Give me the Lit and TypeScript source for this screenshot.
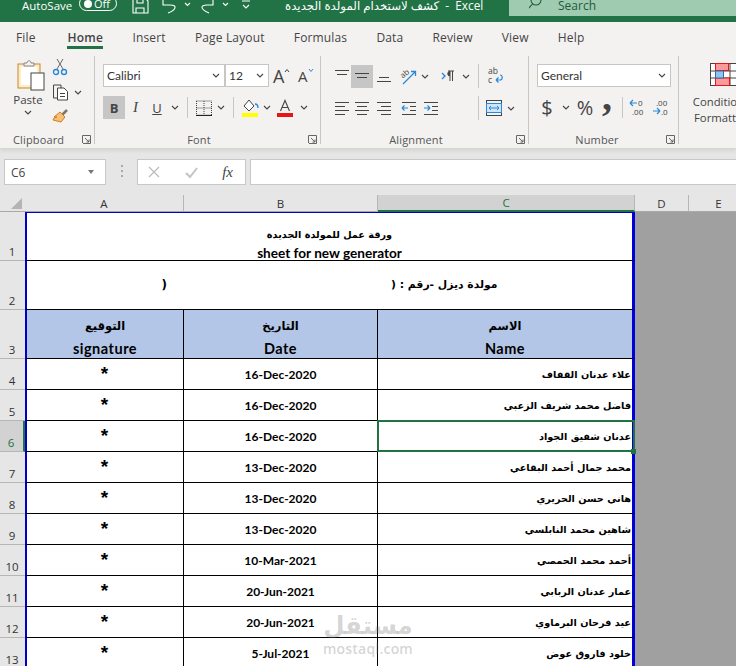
import { LitElement, html, css, svg } from "lit";
import { customElement } from "lit/decorators.js";

const chev = html`<svg class="chev" width="8" height="5" viewBox="0 0 8 5"><path d="M1 1l3 3 3-3" fill="none" stroke="#444" stroke-width="1.1"/></svg>`;

const launcher = html`<svg class="launcher" width="9" height="9" viewBox="0 0 9 9"><path d="M.5 8V.5H8.5V8.5H1M3 3l4 4M7 4.5V7H4.5" fill="none" stroke="#666"/></svg>`;

// horizontal text-alignment glyph: each entry is [x1, x2, y]
const lines = (rows: number[][], extra: unknown = "") => html`<svg width="17" height="16" viewBox="0 0 17 16">
  ${rows.map((r) => svg`<path d="M${r[0]} ${r[2]}.5H${r[1]}" stroke="#444"/>`)}${extra}
</svg>`;

const names = [
  "علاء عدنان القفاف",
  "فاضل محمد شريف الزعبي",
  "عدنان شفيق الجواد",
  "محمد جمال أحمد البقاعي",
  "هاني حسن الحريري",
  "شاهين محمد النابلسي",
  "أحمد محمد الحمصي",
  "عمار عدنان الربابي",
  "عيد فرحان البرماوي",
  "خلود فاروق عوض",
];
const dates = [
  "16-Dec-2020", "16-Dec-2020", "16-Dec-2020", "13-Dec-2020", "13-Dec-2020",
  "13-Dec-2020", "10-Mar-2021", "20-Jun-2021", "20-Jun-2021", "5-Jul-2021",
];
const tabs = ["File", "Home", "Insert", "Page Layout", "Formulas", "Data", "Review", "View", "Help"];

@customElement("app-root")
export class AppRoot extends LitElement {
  static styles = css`
    :host {
      display: block;
      position: relative;
      width: 736px;
      height: 666px;
      overflow: hidden;
      background: #e6e6e6;
      font-family: "Open Sans", "Noto Sans", sans-serif;
      font-size: 12px;
      color: #444;
    }
    svg { display: block; }

    .titlebar {
      display: flex;
      height: 22px;
      overflow: hidden;
      padding-left: 22px;
      background: #217346;
      color: #fff;
    }
    .bar-item { display: flex; align-items: center; height: 10px; white-space: pre; }
    .autosave { width: 52px; font-size: 11.5px; }
    .toggle {
      display: flex;
      align-items: center;
      box-sizing: border-box;
      width: 38px;
      height: 15px;
      margin: -3px 0 0 5px;
      padding: 0 6px 0 4px;
      justify-content: space-between;
      border: 1px solid #fff;
      border-radius: 8px;
      font-size: 11px;
    }
    .knob { width: 8px; height: 8px; border-radius: 50%; background: #fff; }
    .qat { margin-left: 15px; }
    .doc-title { margin-left: 33px; font-family: "Open Sans", "DejaVu Sans", sans-serif; font-size: 11.8px; }
    .search {
      display: flex;
      gap: 12px;
      box-sizing: border-box;
      width: 227px;
      height: 16px;
      margin-left: auto;
      padding-left: 20px;
      background: #9fcbb0;
      color: #1f5a3b;
    }

    .tabs {
      display: flex;
      gap: 29.2px;
      height: 28px;
      padding-left: 16px;
      background: #f3f2f1;
      line-height: 32px;
      font-size: 12px;
      letter-spacing: 0.15px;
    }
    .tab { position: relative; }
    .tab:first-child { margin-right: 2.6px; }
    .tab.on { font-weight: 600; color: #444; letter-spacing: 0.3px; }
    .tab.on::after {
      content: "";
      position: absolute;
      left: 0;
      right: 0;
      bottom: 1px;
      height: 3px;
      background: #217346;
    }

    .ribbon {
      display: flex;
      height: 92px;
      padding: 6px 0 0;
      background: #f3f2f1;
      box-shadow: 0 3px 3px #d6d5d4;
      position: relative;
    }
    .group {
      display: flex;
      flex-direction: column;
      box-sizing: border-box;
      height: 88px;
      padding-top: 8px;
      border-right: 1px solid #c8c6c4;
      flex: none;
    }
    .g-clip { width: 95px; }
    .g-font { width: 226px; padding-left: 8px; }
    .g-align { width: 208px; padding-left: 12px; }
    .g-num { width: 150px; padding-left: 8px; }
    .g-cond { width: 60px; border: 0; margin-left: 14px; align-items: center; padding-top: 7px; white-space: nowrap; line-height: 16px; font-size: 11.3px; }
    .g-cond svg { margin: 0 0 8px 0; }

    .rows { display: flex; flex-direction: column; gap: 9px; flex: 1; }
    .row { display: grid; height: 23px; align-items: center; justify-items: center; }
    .foot {
      display: grid;
      grid-template-columns: 1fr auto 1fr;
      align-items: center;
      height: 14px;
      margin: 0 3px -2px 0;
      font-size: 11px;
      letter-spacing: 0.15px;
      color: #555;
    }
    .g-font .foot, .g-num .foot { margin-left: -8px; }
    .g-align .foot { margin-left: -12px; }
    .foot .mid { margin-right: 14px; }
    .g-num .foot .mid { margin-right: 10px; }
    .launcher { justify-self: end; }
    .foot-l { justify-self: start; }
    .vsep { width: 1px; height: 21px; background: #c8c6c4; }
    .vsep.tall { height: 24px; }

    .clip-body { display: grid; grid-template-columns: 46px 1fr; flex: 1; }
    .paste { display: flex; flex-direction: column; align-items: center; }
    .paste svg:first-child { margin: -4px 0 1px 15px; }
    .paste span { margin: 0 0 3px 10px; font-size: 11.5px; line-height: 15px; }
    .paste .chev { margin-left: 10px; }
    .clip-tools { display: flex; flex-direction: column; gap: 7px; margin-top: -5px; padding-left: 6px; }
    .copy-line { display: flex; align-items: center; gap: 5px; }
    .g-clip .foot { margin-left: 13px; grid-template-columns: auto 1fr; }

    .box {
      display: flex;
      align-items: center;
      justify-content: space-between;
      box-sizing: border-box;
      height: 23px;
      padding: 0 4px 0 3px;
      background: #fff;
      border: 1px solid #c8c6c4;
      color: #333;
      font-family: "Lato", sans-serif;
      font-size: 12px;
      justify-self: stretch;
    }
    .r-font-1 { grid-template-columns: 122px 44px 4px 16px 9px 14px; }
    .r-font-2 { grid-template-columns: 22px 21px 22px 14px 11px 21px 14px 11px 22px 12px 24px 14px; }
    .r-al-1 { grid-template-columns: 18px 22px 22px 26px 8px 6px 26px 10px 14px 20px; }
    .r-al-2 { grid-template-columns: 18px 22px 22px 28px 16px 32px 14px 18px 16px; }
    .r-num-2 { grid-template-columns: 20px 17px 22px 22px 8px 23px 22px; }
    .r-num-1 { grid-template-columns: 134px; }
    .sel { background: #c6c6c6; width: 22px; height: 23px; display: flex; align-items: center; justify-content: center; }
    .fb { font-family: "Liberation Serif", serif; font-size: 15px; }
    .b { font-family: "Open Sans", sans-serif; font-weight: 700; font-size: 13px; }
    .i { font-family: "Liberation Serif", serif; font-style: italic; font-size: 15px; }
    .u { font-size: 13px; text-decoration: underline; }
    .big-a { font-size: 18px; line-height: 20px; display: flex; align-items: flex-start; justify-self: start; }
    .big-a.small { font-size: 15px; }
    .big-a svg { margin-top: 2px; }
    .num-sym { font-size: 20px; line-height: 20px; color: #444; }
    .num-sym.comma { font-family: "Liberation Serif", serif; font-weight: 700; font-size: 40px; line-height: 18px; margin-top: -22px; }

    .formula {
      display: flex;
      align-items: flex-start;
      height: 47px;
      box-sizing: border-box;
      padding: 11px 0 0 4px;
    }
    .fbox {
      box-sizing: border-box;
      height: 26px;
      background: #fff;
      border: 1px solid #c8c8c8;
      display: flex;
      align-items: center;
    }
    .namebox { width: 102px; justify-content: space-between; padding: 0 11px 0 6px; font-size: 12px; color: #444; }
    .arrow { width: 0; height: 0; border: 3.5px solid transparent; border-top: 4px solid #777; border-bottom: 0; }
    .dots { display: flex; flex-direction: column; gap: 3px; margin: 0 14px 0 15px; padding-top: 6px; }
    .dots i { width: 2px; height: 2px; background: #a8a8a8; }
    .fxbox { width: 109px; margin-right: 4px; padding: 0 12px 0 10px; justify-content: space-between; }
    .input { flex: 1; border-right: 0; }

    .sheet {
      display: grid;
      grid-template-columns: 25px 159px 194px 257px 54px 60px;
      grid-template-rows: 17px 49px 49px 49px repeat(10, 31px);
      background: #a0a0a0;
      font-family: "Lato", sans-serif;
      color: #000;
    }
    .corner { background: #e6e6e6; border-bottom: 1px solid #a9a9a9; display: flex; justify-content: flex-end; padding: 3px 3px 0 0; grid-column: 1; }
    .col {
      display: flex;
      align-items: center;
      justify-content: center;
      box-sizing: border-box;
      background: #e6e6e6;
      border-bottom: 1px solid #a9a9a9;
      border-right: 1px solid #b6b6b6;
      font-family: "Open Sans", sans-serif;
      font-size: 11.5px;
      color: #333;
    }
    .col.cur { background: #d2d2d2; border-bottom: 2px solid #217346; color: #217346; }
    .rh {
      grid-column: 1;
      display: flex;
      align-items: flex-end;
      justify-content: center;
      box-sizing: border-box;
      background: #e6e6e6;
      border-bottom: 1px solid #b6b6b6;
      padding-right: 1px;
      font-family: "Open Sans", sans-serif;
      font-size: 11.5px;
      line-height: 17px;
      color: #333;
    }
    .rh.cur { background: #d2d2d2; color: #217346; border-right: 2px solid #217346; }

    .c {
      display: flex;
      align-items: center;
      justify-content: center;
      box-sizing: border-box;
      background: #fff;
      border-right: 1px solid #000;
      border-bottom: 1px solid #000;
      white-space: nowrap;
      position: relative;
    }
    .c.a { border-left: 2px solid #0000c8; }
    .c.z { border-right: 3px solid #0000d8; }
    .wide { grid-column: span 3; border-left: 2px solid #0000c8; border-right: 3px solid #0000d8; }
    .top { border-top: 1px solid #0000c8; flex-direction: column; justify-content: flex-end; }
    .ar { font-family: "DejaVu Sans", sans-serif; font-weight: 700; }
    .t1-ar { font-size: 9.7px; line-height: 19px; margin-bottom: 1px; }
    .t1-en { font-size: 13.6px; font-weight: 700; line-height: 16px; margin-bottom: -1px; }
    .t2 { gap: 224px; font-size: 10.8px; padding: 0 0 1px 0; }
    .t2 span:first-child { font-size: 12px; }
    .head { background: #b4c6e7; flex-direction: column; justify-content: flex-end; }
    .head .ar { font-size: 11.5px; line-height: 26px; }
    .head b { font-size: 14.5px; letter-spacing: 0.5px; line-height: 20px; margin-bottom: -1px; }
    .star { align-items: flex-start; padding: 3px 1px 0 0; font-size: 19px; font-weight: 900; line-height: 24px; font-family: "Liberation Sans", sans-serif; }
    .date { font-size: 12px; font-weight: 700; padding-top: 1px; }
    .name { justify-content: flex-end; font-size: 9.7px; }
    .name span { margin-right: 1px; }
    .active::after {
      content: "";
      position: absolute;
      left: -1px;
      right: -3px;
      top: -1px;
      bottom: -1px;
      border: 2px solid #217346;
    }
    .active::before {
      content: "";
      position: absolute;
      right: -4px;
      bottom: -3px;
      width: 5px;
      height: 5px;
      background: #217346;
      z-index: 1;
    }

    .mark {
      position: absolute;
      left: 323px;
      top: 608px;
      width: 90px;
      text-align: center;
      color: rgba(110, 110, 110, 0.3);
      font-weight: 700;
      pointer-events: none;
    }
    .mark .ar { display: block; font-size: 24.5px; line-height: 36px; }
    .mark .en { display: block; font-family: "Open Sans", sans-serif; font-size: 14px; font-weight: 600; line-height: 10px; letter-spacing: 0.2px; }
  `;

  private titleBar() {
    return html`<div class="titlebar">
      <div class="bar-item autosave">AutoSave</div>
      <div class="bar-item">
        <div class="toggle"><span class="knob"></span><span>Off</span></div>
      </div>
      <svg class="qat" width="120" height="22" viewBox="0 0 120 22" fill="none" stroke="#fff" stroke-width="1.1">
        <path d="M1 -2H13L16 1V13H1ZM4 13V8H12V13M5 -2V3H11V-2"/>
        <path d="M31 0V5H38C46 5 44 10 36 13"/>
        <path d="M53 3l2.500 2.500 2.500-2.500"/>
        <path d="M81 0V5H75C68 5 68 9 77 13"/>
        <path d="M91 3l2.500 2.500 2.500-2.500"/>
        <path d="M110 1H118M111 5l3 3 3-3"/>
      </svg>
      <div class="bar-item doc-title">كشف لاستخدام المولدة الجديدة  -  Excel</div>
      <div class="search">
        <div class="bar-item">
          <svg width="17" height="14" viewBox="0 0 17 14" fill="none" stroke="#1f5a3b" stroke-width="1.1"><circle cx="7" cy="2" r="5"/><path d="M3.500 6L-1 11"/></svg>
        </div>
        <div class="bar-item">Search</div>
      </div>
    </div>`;
  }

  private clipboard() {
    return html`<section class="group g-clip">
      <div class="clip-body">
        <div class="paste">
          <svg width="28" height="31" viewBox="0 0 28 31">
            <rect x="1" y="4" width="22" height="24" fill="#fdeec8" stroke="#c8862a"/>
            <rect x="4" y="7" width="16" height="18" fill="#fff" stroke="none"/>
            <path d="M7 6V3H10C10 0 14 0 14 3H17V6Z" fill="#f3f2f1" stroke="#888"/>
            <rect x="14" y="13" width="13" height="17" fill="#fff" stroke="#444"/>
          </svg>
          <span>Paste</span>
          ${chev}
        </div>
        <div class="clip-tools">
          <svg width="16" height="18" viewBox="0 0 16 18" fill="none">
            <path d="M5 0l6 10M11 0L5 10" stroke="#666"/>
            <circle cx="4" cy="13" r="2.500" stroke="#2b88d8" stroke-width="1.400"/>
            <circle cx="12" cy="13" r="2.500" stroke="#2b88d8" stroke-width="1.400"/>
          </svg>
          <div class="copy-line">
            <svg width="17" height="17" viewBox="0 0 17 17" fill="#f3f2f1" stroke="#444">
              <path d="M1.500 1H9V14H1.500Z"/><path d="M5.500 4H12L15.500 7.500V16H5.500Z" fill="#fff"/>
              <path d="M8 9.500H13M8 12.500H13"/>
            </svg>
            ${chev}
          </div>
          <svg width="18" height="16" viewBox="0 0 18 16">
            <path d="M10 7l5-5" stroke="#777" stroke-width="2.500"/>
            <path d="M8 4l5 5-4 5-8-2 1-2 3-1-3 0Z" fill="#f5c179" stroke="#d57e1c"/>
          </svg>
        </div>
      </div>
      <div class="foot"><span class="foot-l">Clipboard</span>${launcher}</div>
    </section>`;
  }

  private font() {
    return html`<section class="group g-font">
      <div class="rows">
        <div class="row r-font-1">
          <div class="box"><span>Calibri</span>${chev}</div>
          <div class="box"><span>12</span>${chev}</div>
          <span></span>
          <span class="big-a">A<svg width="6" height="5" viewBox="0 0 6 5"><path d="M1 4l2-2.500L5 4" fill="none" stroke="#444"/></svg></span>
          <span></span>
          <span class="big-a small">A<svg width="6" height="5" viewBox="0 0 6 5"><path d="M1 1l2 2.500L5 1" fill="none" stroke="#2b88d8"/></svg></span>
        </div>
        <div class="row r-font-2">
          <div class="sel b">B</div>
          <span class="i">I</span>
          <span class="u">U</span>
          ${chev}
          <div class="vsep"></div>
          <svg width="16" height="16" viewBox="0 0 16 16" fill="none">
            <path d="M.5 1H15.500V15M.500 1V15M8 1V15M.500 8H15.500" stroke="#444" stroke-dasharray="1 1"/>
            <path d="M0 15.500H16" stroke="#222" stroke-width="1.300"/>
          </svg>
          ${chev}
          <div class="vsep"></div>
          <svg width="17" height="18" viewBox="0 0 17 18" fill="none">
            <path d="M7 1L2 7l5 5 5-5Z" fill="#fff" stroke="#444"/>
            <path d="M13 5c2 0 3 1 3 4" stroke="#2b88d8" stroke-width="1.400"/>
            <rect x="0" y="14" width="16" height="4" fill="#ffff00"/>
          </svg>
          ${chev}
          <svg width="17" height="18" viewBox="0 0 17 18" fill="none">
            <path d="M3.500 12L8 1.500 12.500 12M5 8.500H11" stroke="#444" stroke-width="1.100"/>
            <rect x="0" y="14" width="16" height="4" fill="#e81416"/>
          </svg>
          ${chev}
        </div>
      </div>
      <div class="foot"><span></span><span class="mid">Font</span>${launcher}</div>
    </section>`;
  }

  private alignment() {
    return html`<section class="group g-align">
      <div class="rows">
        <div class="row r-al-1">
          ${lines([[1, 15, 2], [3, 13, 6]])}
          <div class="sel">${lines([[1, 15, 5], [3, 13, 9]])}</div>
          ${lines([[3, 13, 9], [1, 15, 13]])}
          <svg width="17" height="17" viewBox="0 0 17 17" fill="none">
            <path d="M3 16L15 4M11 3.500H15.500V8" stroke="#2b88d8" stroke-width="1.300"/>
            <text x="0" y="9" font-size="8" fill="#444" font-family="Open Sans" transform="rotate(-40 4 6)">ab</text>
          </svg>
          ${chev}
          <span></span>
          <svg width="14" height="14" viewBox="0 0 14 14" fill="none">
            <path d="M1 4l3 3-3 3" stroke="#2b88d8" stroke-width="1.400"/>
            <path d="M7 2H13M9 2V12M11.500 2V12" stroke="#444"/>
            <path d="M9 2.500a2.200 2.200 0 0 0 0 4.500" fill="#444" stroke="#444"/>
          </svg>
          ${chev}
          <div class="vsep tall"></div>
          <svg width="17" height="18" viewBox="0 0 17 18" fill="none">
            <text x="1" y="7" font-size="8.500" fill="#444" font-family="Open Sans">ab</text>
            <text x="1" y="16" font-size="8.500" fill="#444" font-family="Open Sans">c</text>
            <path d="M9 13H13C16 13 16 8 13 8M9 13l2.500-2.500M9 13l2.500 2.500" stroke="#2b88d8" stroke-width="1.200"/>
          </svg>
        </div>
        <div class="row r-al-2">
          ${lines([[1, 15, 2], [1, 11, 6], [1, 15, 10], [1, 11, 14]])}
          ${lines([[1, 15, 2], [3, 13, 6], [1, 15, 10], [3, 13, 14]])}
          ${lines([[1, 15, 2], [5, 15, 6], [1, 15, 10], [5, 15, 14]])}
          ${lines([[1, 15, 2], [9, 15, 6], [9, 15, 10], [1, 15, 14]],
            svg`<path d="M1 8H7M1 8l2.500-2.500M1 8l2.500 2.500" fill="none" stroke="#2b88d8" stroke-width="1.200"/>`)}
          ${lines([[1, 15, 2], [9, 15, 6], [9, 15, 10], [1, 15, 14]],
            svg`<path d="M1 8H7M7 8L4.500 5.500M7 8l-2.500 2.500" fill="none" stroke="#2b88d8" stroke-width="1.200"/>`)}
          <span></span>
          <div class="vsep tall"></div>
          <svg width="16" height="16" viewBox="0 0 16 16" fill="none">
            <rect x=".5" y=".5" width="15" height="15" stroke="#444"/>
            <rect x=".5" y="3.500" width="15" height="9" fill="#cfe4f7" stroke="#2b88d8"/>
            <path d="M3 8H13M3 8l2-2M3 8l2 2M13 8l-2-2M13 8l-2 2" stroke="#2b88d8"/>
          </svg>
          ${chev}
        </div>
      </div>
      <div class="foot"><span></span><span class="mid">Alignment</span>${launcher}</div>
    </section>`;
  }

  private number() {
    return html`<section class="group g-num">
      <div class="rows">
        <div class="row r-num-1">
          <div class="box"><span>General</span>${chev}</div>
        </div>
        <div class="row r-num-2">
          <span class="num-sym">$</span>
          ${chev}
          <span class="num-sym">%</span>
          <span class="num-sym comma">,</span>
          <div class="vsep"></div>
          <svg width="17" height="17" viewBox="0 0 17 17">
            <path d="M1 4H8M1 4l3-3M1 4l3 3" fill="none" stroke="#2b88d8" stroke-width="1.200"/>
            <text x="9" y="7" font-size="8" fill="#444" font-family="Open Sans">0</text>
            <text x="3" y="16" font-size="8" fill="#444" font-family="Open Sans">.00</text>
          </svg>
          <svg width="17" height="17" viewBox="0 0 17 17">
            <text x="4" y="7" font-size="8" fill="#444" font-family="Open Sans">.00</text>
            <path d="M1 12H8M8 12l-3-3M8 12l-3 3" fill="none" stroke="#2b88d8" stroke-width="1.200"/>
            <text x="9" y="16" font-size="8" fill="#444" font-family="Open Sans">.0</text>
          </svg>
        </div>
      </div>
      <div class="foot"><span></span><span class="mid">Number</span>${launcher}</div>
    </section>`;
  }

  private conditional() {
    return html`<section class="group g-cond">
      <svg width="27" height="23" viewBox="0 0 27 23">
        <rect x=".5" y=".5" width="26" height="22" fill="#fff" stroke="#444"/>
        <path d="M.5 8H26.500M.5 15H26.500M6 .5V22.500M20 .5V22.500" stroke="#444"/>
        <rect x="5.500" y=".5" width="13" height="7" fill="#fb9a9a" stroke="#e81416"/>
        <rect x="5.500" y="15" width="14" height="7.500" fill="#fb9a9a" stroke="#e81416"/>
        <rect x="5.500" y="8" width="8" height="7" fill="#8ec5ef" stroke="#2b6cb0"/>
      </svg>
      <span>Conditional</span>
      <span>Formatting</span>
    </section>`;
  }

  render() {
    return html`
      ${this.titleBar()}
      <nav class="tabs">
        ${tabs.map((t) => html`<span class="tab ${t === "Home" ? "on" : ""}">${t}</span>`)}
      </nav>
      <div class="ribbon">
        ${this.clipboard()} ${this.font()} ${this.alignment()} ${this.number()} ${this.conditional()}
      </div>
      <div class="formula">
        <div class="fbox namebox"><span>C6</span><i class="arrow"></i></div>
        <div class="dots"><i></i><i></i><i></i></div>
        <div class="fbox fxbox">
          <svg width="13" height="13" viewBox="0 0 13 13"><path d="M1 1l10 10M11 1L1 11" stroke="#bdbdbd" stroke-width="1.300"/></svg>
          <svg width="15" height="13" viewBox="0 0 15 13"><path d="M2 7l4 4 7-9" fill="none" stroke="#c4c4c4" stroke-width="2"/></svg>
          <span class="fb"><i>f</i><i>x</i></span>
        </div>
        <div class="fbox input"></div>
      </div>
      <div class="sheet">
        <div class="corner"><svg width="11" height="11" viewBox="0 0 11 11"><path d="M11 0V11H0Z" fill="#b4b4b4"/></svg></div>
        <div class="col">A</div>
        <div class="col">B</div>
        <div class="col cur">C</div>
        <div class="col">D</div>
        <div class="col">E</div>

        <div class="rh">1</div>
        <div class="c wide top">
          <span class="ar t1-ar">ورقة عمل للمولدة الجديدة</span>
          <span class="t1-en">sheet for new generator</span>
        </div>

        <div class="rh">2</div>
        <div class="c wide t2">
          <span class="ar">)</span>
          <span class="ar" dir="rtl">مولدة ديزل -رقم : (</span>
        </div>

        <div class="rh">3</div>
        <div class="c a head"><span class="ar">التوقيع</span><b>signature</b></div>
        <div class="c head"><span class="ar">التاريخ</span><b>Date</b></div>
        <div class="c z head"><span class="ar">الاسم</span><b>Name</b></div>

        ${names.map(
          (n, i) => html`
            <div class="rh ${i === 2 ? "cur" : ""}">${i + 4}</div>
            <div class="c a star">*</div>
            <div class="c date">${dates[i]}</div>
            <div class="c z name ar ${i === 2 ? "active" : ""}"><span>${n}</span></div>
          `
        )}
      </div>
      <div class="mark">
        <span class="ar">مستقل</span>
        <span class="en">mostaql.com</span>
      </div>
    `;
  }
}
